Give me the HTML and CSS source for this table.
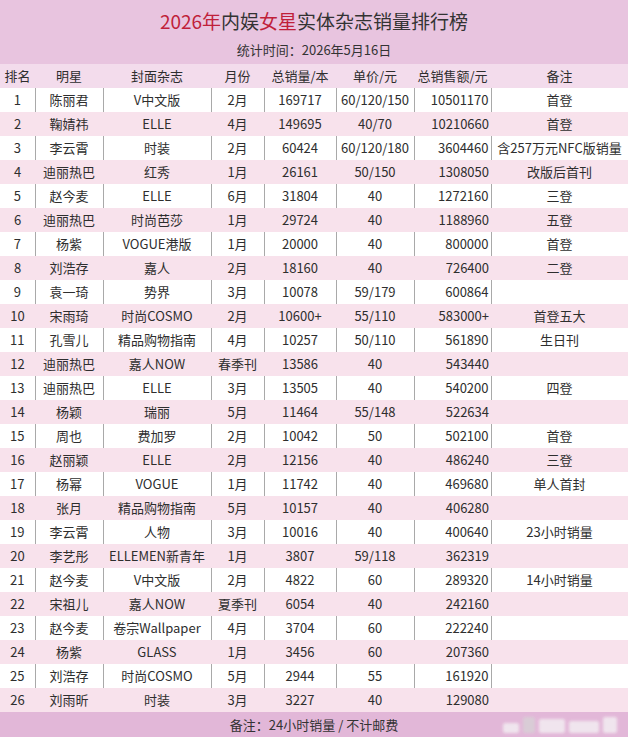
FILE: index.html
```html
<!DOCTYPE html>
<html lang="zh-CN">
<head>
<meta charset="utf-8">
<title>2026年内娱女星实体杂志销量排行榜</title>
<link rel="stylesheet" href="styles.css">
</head>
<body>
<div class="page">
  <header class="banner">
    <h1 class="title"><span class="red">2026年</span>内娱<span class="red">女星</span>实体杂志销量排行榜</h1>
    <p class="subtitle">统计时间：2026年5月16日</p>
  </header>
  <table class="rank">
    <colgroup>
      <col class="c1"><col class="c2"><col class="c3"><col class="c4"><col class="c5"><col class="c6"><col class="c7"><col class="c8">
    </colgroup>
    <thead>
      <tr><th>排名</th><th>明星</th><th>封面杂志</th><th>月份</th><th>总销量/本</th><th>单价/元</th><th>总销售额/元</th><th>备注</th></tr>
    </thead>
    <tbody>
      <tr><td>1</td><td>陈丽君</td><td>V中文版</td><td>2月</td><td>169717</td><td>60/120/150</td><td class="r">10501170</td><td>首登</td></tr>
      <tr><td>2</td><td>鞠婧祎</td><td>ELLE</td><td>4月</td><td>149695</td><td>40/70</td><td class="r">10210660</td><td>首登</td></tr>
      <tr><td>3</td><td>李云霄</td><td>时装</td><td>2月</td><td>60424</td><td>60/120/180</td><td class="r">3604460</td><td>含257万元NFC版销量</td></tr>
      <tr><td>4</td><td>迪丽热巴</td><td>红秀</td><td>1月</td><td>26161</td><td>50/150</td><td class="r">1308050</td><td>改版后首刊</td></tr>
      <tr><td>5</td><td>赵今麦</td><td>ELLE</td><td>6月</td><td>31804</td><td>40</td><td class="r">1272160</td><td>三登</td></tr>
      <tr><td>6</td><td>迪丽热巴</td><td>时尚芭莎</td><td>1月</td><td>29724</td><td>40</td><td class="r">1188960</td><td>五登</td></tr>
      <tr><td>7</td><td>杨紫</td><td>VOGUE港版</td><td>1月</td><td>20000</td><td>40</td><td class="r">800000</td><td>首登</td></tr>
      <tr><td>8</td><td>刘浩存</td><td>嘉人</td><td>2月</td><td>18160</td><td>40</td><td class="r">726400</td><td>二登</td></tr>
      <tr><td>9</td><td>袁一琦</td><td>势界</td><td>3月</td><td>10078</td><td>59/179</td><td class="r">600864</td><td></td></tr>
      <tr><td>10</td><td>宋雨琦</td><td>时尚COSMO</td><td>2月</td><td>10600+</td><td>55/110</td><td class="r">583000+</td><td>首登五大</td></tr>
      <tr><td>11</td><td>孔雪儿</td><td>精品购物指南</td><td>4月</td><td>10257</td><td>50/110</td><td class="r">561890</td><td>生日刊</td></tr>
      <tr><td>12</td><td>迪丽热巴</td><td>嘉人NOW</td><td>春季刊</td><td>13586</td><td>40</td><td class="r">543440</td><td></td></tr>
      <tr><td>13</td><td>迪丽热巴</td><td>ELLE</td><td>3月</td><td>13505</td><td>40</td><td class="r">540200</td><td>四登</td></tr>
      <tr><td>14</td><td>杨颖</td><td>瑞丽</td><td>5月</td><td>11464</td><td>55/148</td><td class="r">522634</td><td></td></tr>
      <tr><td>15</td><td>周也</td><td>费加罗</td><td>2月</td><td>10042</td><td>50</td><td class="r">502100</td><td>首登</td></tr>
      <tr><td>16</td><td>赵丽颖</td><td>ELLE</td><td>2月</td><td>12156</td><td>40</td><td class="r">486240</td><td>三登</td></tr>
      <tr><td>17</td><td>杨幂</td><td>VOGUE</td><td>1月</td><td>11742</td><td>40</td><td class="r">469680</td><td>单人首封</td></tr>
      <tr><td>18</td><td>张月</td><td>精品购物指南</td><td>5月</td><td>10157</td><td>40</td><td class="r">406280</td><td></td></tr>
      <tr><td>19</td><td>李云霄</td><td>人物</td><td>3月</td><td>10016</td><td>40</td><td class="r">400640</td><td>23小时销量</td></tr>
      <tr><td>20</td><td>李艺彤</td><td>ELLEMEN新青年</td><td>1月</td><td>3807</td><td>59/118</td><td class="r">362319</td><td></td></tr>
      <tr><td>21</td><td>赵今麦</td><td>V中文版</td><td>2月</td><td>4822</td><td>60</td><td class="r">289320</td><td>14小时销量</td></tr>
      <tr><td>22</td><td>宋祖儿</td><td>嘉人NOW</td><td>夏季刊</td><td>6054</td><td>40</td><td class="r">242160</td><td></td></tr>
      <tr><td>23</td><td>赵今麦</td><td>卷宗Wallpaper</td><td>4月</td><td>3704</td><td>60</td><td class="r">222240</td><td></td></tr>
      <tr><td>24</td><td>杨紫</td><td>GLASS</td><td>1月</td><td>3456</td><td>60</td><td class="r">207360</td><td></td></tr>
      <tr><td>25</td><td>刘浩存</td><td>时尚COSMO</td><td>5月</td><td>2944</td><td>55</td><td class="r">161920</td><td></td></tr>
      <tr><td>26</td><td>刘雨昕</td><td>时装</td><td>3月</td><td>3227</td><td>40</td><td class="r">129080</td><td></td></tr>
    </tbody>
  </table>
  <footer class="footer">
    <span>备注：24小时销量 / 不计邮费</span>
    <div class="watermark" aria-hidden="true">
      <i class="wm w1"></i><i class="wm w2"></i><i class="wm w3"></i><i class="wm w4"></i><i class="wm w5"></i>
    </div>
  </footer>
</div>
</body>
</html>
```

FILE: styles.css
```css
html, body {
  margin: 0;
  padding: 0;
  background: #ffffff;
}

.page {
  width: 628px;
  height: 737px;
  overflow: hidden;
  font-family: "Noto Sans CJK SC", "Noto Sans", sans-serif;
  color: #2e2e2e;
}

.banner {
  height: 64px;
  box-sizing: border-box;
  padding-top: 9px;
  background: #e8c4df;
  text-align: center;
}

.title {
  margin: 0;
  font-size: 19px;
  line-height: 24px;
  font-weight: 400;
  letter-spacing: 0;
  color: #333333;
}

.red {
  color: #c01f3a;
}

.subtitle {
  margin: 8px 0 0;
  font-size: 13px;
  line-height: 18px;
  color: #333333;
}

.rank {
  width: 628px;
  border-collapse: collapse;
  table-layout: fixed;
  font-size: 13px;
}

.c1 { width: 35px; }
.c2 { width: 68px; }
.c3 { width: 108px; }
.c4 { width: 53px; }
.c5 { width: 72px; }
.c6 { width: 78px; }
.c7 { width: 77px; }
.c8 { width: 137px; }

.rank th,
.rank td {
  height: 24px;
  padding: 0;
  text-align: center;
  font-weight: 400;
  white-space: nowrap;
  line-height: 24px;
  box-sizing: border-box;
}

.rank thead tr {
  background: #f3dcec;
}

.rank tbody tr:nth-child(even) {
  background: #f8e2ec;
}

.rank tbody tr:nth-child(odd) {
  background: #ffffff;
}

.rank tbody tr:nth-child(odd) td + td {
  border-left: 1px solid #a9a9a9;
}

.rank tbody tr:nth-child(odd) td:last-child {
  border-right: 1px solid #c8c8c8;
}

.rank td.r {
  text-align: right;
  padding-right: 2px;
}

.footer {
  position: relative;
  height: 25px;
  background: #e2b7d8;
  display: flex;
  align-items: center;
  justify-content: center;
  font-size: 13px;
  color: #333333;
}

.watermark {
  position: absolute;
  left: 503px;
  top: 3px;
  width: 120px;
  height: 18px;
  display: flex;
  align-items: flex-end;
  gap: 4px;
  filter: blur(1.5px);
  opacity: 0.85;
}

.wm {
  display: block;
  height: 14px;
  background: #f3eef2;
  border-radius: 2px;
}

.w1 { width: 16px; height: 10px; }
.w2 { width: 12px; height: 16px; background: #d8d0d6; }
.w3 { width: 26px; }
.w4 { width: 30px; height: 12px; }
.w5 { width: 14px; height: 16px; }
```
